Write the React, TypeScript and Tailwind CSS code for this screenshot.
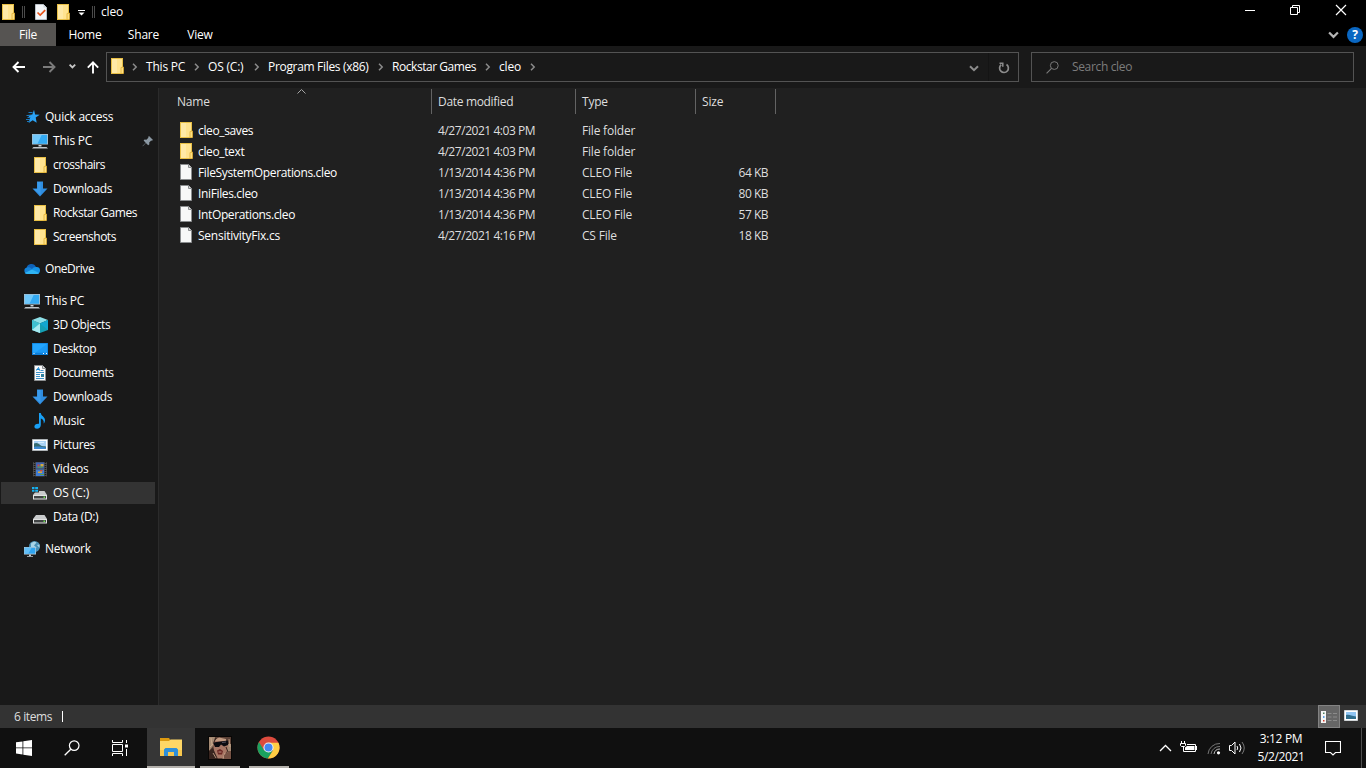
import type { ReactNode } from "react";

interface IconProps {
  className?: string;
}

// Icons
const Folder = ({ className = "w-4 h-4" }: IconProps) => (
  <svg viewBox="0 0 16 16" className={className}>
    <path d="M2 0h12v16H2z" fill="#e8bf45" />
    <path d="M3 1h10v14H3z" fill="#ffe38f" />
    <path d="M3 1h5v14H3z" fill="#ffe9a6" />
    <path d="M12 9.5l2.5-.5v6.5H12z" fill="#ffe082" stroke="#dfae33" strokeWidth="0.8" />
  </svg>
);

const BlankFile = () => (
  <svg viewBox="0 0 16 16" className="w-4 h-4">
    <path d="M2.5.5h8l3 3v12h-11z" fill="#f7f8f8" stroke="#8a8d8f" />
    <path d="M10.5.5v3h3" fill="#d8dadb" stroke="#8a8d8f" />
  </svg>
);

const CheckFile = () => (
  <svg viewBox="0 0 16 16" className="w-4 h-4">
    <path d="M2.5.5h8l3 3v12h-11z" fill="#f3f6f9" stroke="#b9c1c8" />
    <path d="M10.5.5v3h3" fill="#ccd3d9" />
    <path d="M4.5 8.5l2.7 2.6 5-5" fill="none" stroke="#e8551c" strokeWidth="1.7" />
  </svg>
);

const Star = () => (
  <svg viewBox="0 0 16 16" className="w-4 h-4">
    <path d="M10 .8l1.100 4.700 4.600.3-4 2.800 1 5.100L8.700 11.200 4.700 14l1.200-5L3.800 6l4.500-.5z" fill="#2ba3f5" />
    <path d="M4.500 3.500h4M2.500 6.500h4M3.500 8.500h3M2 10.500h4M3 12.500h3" stroke="#1b79bd" strokeWidth="1" />
  </svg>
);

const Computer = () => (
  <svg viewBox="0 0 16 16" className="w-4 h-4">
    <path d="M0 1h16v10.5H0z" fill="#b5c4ce" />
    <path d="M.8 1.8h14.4v9H.8z" fill="#33aaf3" />
    <path d="M.8 1.8h9L5.5 10.8H.8z" fill="#70c8fb" />
    <path d="M6.5 12h3v1.5h-3z" fill="#cfd6db" />
    <path d="M1.5 14h13l1.5 1.6H0z" fill="#c1c8cd" />
  </svg>
);

const DownArrow = () => (
  <svg viewBox="0 0 16 16" className="w-4 h-4">
    <path d="M5 .5h6v7h4.5L8 15.5.5 7.5H5z" fill="#2f8de0" />
    <path d="M5.5 1h3v13L1.5 8h4z" fill="#3a9bec" />
  </svg>
);

const OneDrive = () => (
  <svg viewBox="0 0 16 16" className="w-4 h-4">
    <path d="M2.500 7.200A5 5 0 0 1 12 6l-5 5z" fill="#0f62b8" />
    <path d="M3 6.500c1.800-.4 3.300.2 4.600 1.200l3 2.500L5 13H3.200A3.300 3.300 0 0 1 3 6.500z" fill="#1482d8" />
    <path d="M8 8.200c1-2 3-2.600 4.600-2.200A3.600 3.600 0 0 1 16 9.800c0 1.800-1.300 3.200-3 3.200h-3z" fill="#1593e6" />
    <path d="M.7 12l7.300-3.400 7.200 3.400c-.6.7-1.400 1-2.300 1H3.500C2.300 13 1.400 12.700.7 12z" fill="#2fb4f4" />
  </svg>
);

const Cube = () => (
  <svg viewBox="0 0 16 16" className="w-4 h-4">
    <path d="M8 0l8 3-8 3.5L0 3z" fill="#8ee0e8" />
    <path d="M0 3l8 3.5V16l-8-3z" fill="#63d0dc" />
    <path d="M0 3l8 3.5L0 13z" fill="#3fc0d0" />
    <path d="M16 3L8 6.5V16l8-3z" fill="#159fb3" />
    <path d="M0 13l8-6.500V16z" fill="#a5eaf0" />
    <path d="M16 3L8 6.5l8 6.5z" fill="#12a6cf" />
  </svg>
);

const Desktop = () => (
  <svg viewBox="0 0 16 16" className="w-4 h-4">
    <path d="M0 2h16v12H0z" fill="#0f7fd8" />
    <path d="M.8 2.8h14.4v9H.8z" fill="#1a99f5" />
    <path d="M.8 2.8h14.4l-12 9H.8z" fill="#23a5ff" />
    <path d="M1.500 12.500h1M11 12.500h1M14 12.500h1" stroke="#fff" />
  </svg>
);

const Document = () => (
  <svg viewBox="0 0 16 16" className="w-4 h-4">
    <path d="M2.5.5h8l3 3v12h-11z" fill="#fafafa" stroke="#8d9092" />
    <path d="M10.5.5v3h3" fill="#ddd" stroke="#8d9092" />
    <path d="M4.500 5.500l2-3 1 3M4.500 4.500h3" stroke="#1585d0" fill="none" />
    <path d="M8.500 5.500h3M4 7.500h8M4 9.500h4M4 11.500h4M4 13.500h8" stroke="#3b91c9" />
    <path d="M9 9h3v3H9z" fill="#2d7f9c" />
  </svg>
);

const Music = () => (
  <svg viewBox="0 0 16 16" className="w-4 h-4">
    <path d="M7 0h1.800c.2 3 4.200 3.600 4.200 7.200 0 1.300-.5 2.500-1.300 3.300C12.200 7.500 10.500 6 8.800 5.500V12c0 2.200-1.700 3.700-3.800 3.700-1.600 0-2.600-1-2.600-2.300 0-1.700 1.800-3 4.600-2.700z" fill="#18a0f6" />
  </svg>
);

const Picture = () => (
  <svg viewBox="0 0 16 16" className="w-4 h-4">
    <path d="M.5 2.500h15v11H.5z" fill="#fff" stroke="#aeb3b6" />
    <path d="M2 4h12v8H2z" fill="#a9d2f5" />
    <path d="M2 6.500c3-1.500 5 .5 6.500 1.700S12 9 14 9.500V12H2z" fill="#356b70" />
    <path d="M2 10c3-1 8 0 12 .5V12H2z" fill="#3e8ad0" />
    <path d="M6 5.500h6" stroke="#d5ecfd" />
  </svg>
);

const Video = () => (
  <svg viewBox="0 0 16 16" className="w-4 h-4">
    <path d="M1 1h14v14.500H1z" fill="#4d4d4d" />
    <path d="M2.500 1v15M13.500 1v15" stroke="#191919" strokeWidth="1.500" strokeDasharray="1 1" />
    <path d="M4 1.500h8v6H4z" fill="#3a62b4" />
    <path d="M4 8.500h8v6.500H4z" fill="#3f7cd4" />
    <path d="M5.500 3.500h2v2h-2zM8 9h2.500v1.500H8z" fill="#d2483b" />
    <path d="M8.500 3h3v2.500h-3zM6 10.500h4V12H6z" fill="#d5a93b" />
    <path d="M5.500 5.500h5v1.200h-5zM8 13h4v1H8z" fill="#58a04a" />
  </svg>
);

const Drive = ({ windows }: { windows?: boolean }) => (
  <svg viewBox="0 0 16 16" className="w-4 h-4">
    <path d="M4 6h8.500L15 10H1z" fill="#c9cbcc" />
    <path d="M1 10h14v4.500H1z" fill="#e2e3e3" />
    <path d="M2 11h12v2.500H2z" fill="#414445" />
    <path d="M11.500 11.500h1.500v1.500h-1.500z" fill="#6be34c" />
    {windows && (
      <>
        <path d="M0 1h7v6.500H0z" fill="#333" />
        <path d="M0 2h2.500v2H0zM3.200 2H6v2H3.200zM0 4.700h2.500v2H0zM3.200 4.700H6v2H3.200z" fill="#15b1f1" />
      </>
    )}
  </svg>
);

const Network = () => (
  <svg viewBox="0 0 16 16" className="w-4 h-4">
    <circle cx="10.500" cy="5.500" r="5.500" fill="#4a90b5" />
    <path d="M7 2.500c2-2 4-2 5.500-1L10 4.500l2.500 2-2 3L7 6zM13 4l2.500-.5V7z" fill="#a9d4e6" />
    <path d="M0 6h12v7.500H0z" fill="#b6ccd9" />
    <path d="M.7 6.700h10.600v6H.7z" fill="#2fa4ef" />
    <path d="M.7 6.700h7l-3.500 6H.7z" fill="#63bff7" />
    <path d="M5 13.500h2V15h2v.8H3V15h2z" fill="#c1c8cd" />
  </svg>
);

const Pin = () => (
  <svg viewBox="0 0 12 12" className="w-3 h-3">
    <path d="M7 1l4 4-1.200.7-.6-.2-2 2 .2 1.800-1.200 1-2.300-2.300L.8 11.200.5 11l3.200-3.200L1.600 5.500l1-1 1.800.2 2-2-.2-.7z" fill="#8b98a3" />
  </svg>
);

const Chevron = () => (
  <svg viewBox="0 0 6 8" className="w-1.5 h-2">
    <path d="M1 .8L4.200 4 1 7.200" fill="none" stroke="#8c8c8c" strokeWidth="1.500" />
  </svg>
);

const ChevronDown = ({ className }: IconProps) => (
  <svg viewBox="0 0 10 7" className={className}>
    <path d="M1 1.200l4 4 4-4" fill="none" stroke="currentColor" strokeWidth="2" />
  </svg>
);

const Glass = ({ className }: IconProps) => (
  <svg viewBox="0 0 16 16" className={className}>
    <circle cx="10.200" cy="5.600" r="4.800" fill="none" stroke="currentColor" strokeWidth="1.200" />
    <path d="M6.800 9.200L.7 15.300" stroke="currentColor" strokeWidth="1.300" />
  </svg>
);

const Chrome = () => (
  <svg viewBox="0 0 24 24" className="w-[23px] h-[23px]">
    <circle cx="12" cy="12" r="11.500" fill="#dd4b3e" />
    <path d="M2 6.200A11.500 11.500 0 0 0 11.400 23.500L16.800 14.800 7.300 14.800z" fill="#1aa15f" />
    <path d="M11.400 23.500A11.500 11.500 0 0 0 22.400 7H12l4.800 7.800z" fill="#ffce44" />
    <circle cx="12" cy="12" r="5.300" fill="#f1f1f1" />
    <circle cx="12" cy="12" r="4.200" fill="#4587f3" />
  </svg>
);

const GameIcon = () => (
  <svg viewBox="0 0 24 24" className="w-6 h-6">
    <path d="M0 0h24v24H0z" fill="#080605" />
    <path d="M1 1h22v22H1z" fill="#5b4136" />
    <path d="M1 1h6l-2 9-4 5zM19 8h4v8l-4 3z" fill="#a58b74" />
    <path d="M5 6l5-4 7 2 3 5-1 6-4 7H9l-3-7z" fill="#a87866" />
    <path d="M7 4l4-2.500L18 3v2H7z" fill="#c29b82" />
    <path d="M5 6.500L20 4.500v4.500l-4 1.500-3-2-2 2.500H7z" fill="#0c0c10" />
    <path d="M14 6.500l4-.5" stroke="#52515e" />
    <path d="M9 14.500l3-1.500 3 2-1 3.500h-4z" fill="#6d2924" />
    <path d="M10.500 16h3" stroke="#b98f80" />
    <path d="M1 15l4-3 2 5 3 6H1z" fill="#38251f" />
    <path d="M3 2l1 7M5 17l3 5M17 17l-2 6M21 3l1 8M2 11l3-3" stroke="#cfad90" strokeWidth=".8" />
    <path d="M16 19l5-4h2v8h-7z" fill="#765244" />
    <path d="M8 2L6 6M18 11l2 5" stroke="#34231c" />
    <path d="M.5.5h23v23H.5z" fill="none" stroke="#080605" />
  </svg>
);

const ExplorerIcon = () => (
  <svg viewBox="0 0 22 18" className="w-[22px] h-[18px]">
    <path d="M0 0h9l1 1.500V5H0z" fill="#dc9a10" />
    <path d="M0 3h9l1.500-1.500H22V18H0z" fill="#ffd766" />
    <path d="M0 12h22v6H0z" fill="#f8c84e" />
    <path d="M4 18v-6.500L5.500 10h11l1.500 1.500V18h-4v-4H8v4z" fill="#2f8fd8" />
  </svg>
);

// Sidebar
interface NavItem {
  label: string;
  icon: ReactNode;
  active?: boolean;
  pinned?: boolean;
  tracking?: string;
}

interface NavGroup {
  root: NavItem;
  items: NavItem[];
}

const groups: NavGroup[] = [
  {
    root: { label: "Quick access", icon: <Star />, tracking: "tracking-[-0.25px]" },
    items: [
      { label: "This PC", icon: <Computer />, pinned: true },
      { label: "crosshairs", icon: <Folder />, tracking: "tracking-[-0.5px]" },
      { label: "Downloads", icon: <DownArrow />, tracking: "tracking-[-0.4px]" },
      { label: "Rockstar Games", icon: <Folder />, tracking: "tracking-[-0.45px]" },
      { label: "Screenshots", icon: <Folder />, tracking: "tracking-[-0.5px]" },
    ],
  },
  { root: { label: "OneDrive", icon: <OneDrive />, tracking: "tracking-[-0.45px]" }, items: [] },
  {
    root: { label: "This PC", icon: <Computer /> },
    items: [
      { label: "3D Objects", icon: <Cube />, tracking: "tracking-[-0.35px]" },
      { label: "Desktop", icon: <Desktop />, tracking: "tracking-[-0.45px]" },
      { label: "Documents", icon: <Document />, tracking: "tracking-[-0.4px]" },
      { label: "Downloads", icon: <DownArrow />, tracking: "tracking-[-0.4px]" },
      { label: "Music", icon: <Music /> },
      { label: "Pictures", icon: <Picture />, tracking: "tracking-[-0.4px]" },
      { label: "Videos", icon: <Video />, tracking: "tracking-[-0.3px]" },
      { label: "OS (C:)", icon: <Drive windows />, active: true, tracking: "tracking-[-0.1px]" },
      { label: "Data (D:)", icon: <Drive />, tracking: "tracking-[-0.35px]" },
    ],
  },
  { root: { label: "Network", icon: <Network />, tracking: "tracking-[-0.3px]" }, items: [] },
];

// Files
const files = [
  { name: "cleo_saves", date: "4/27/2021 4:03 PM", type: "File folder", size: "" },
  { name: "cleo_text", date: "4/27/2021 4:03 PM", type: "File folder", size: "" },
  { name: "FileSystemOperations.cleo", date: "1/13/2014 4:36 PM", type: "CLEO File", size: "64 KB" },
  { name: "IniFiles.cleo", date: "1/13/2014 4:36 PM", type: "CLEO File", size: "80 KB" },
  { name: "IntOperations.cleo", date: "1/13/2014 4:36 PM", type: "CLEO File", size: "57 KB" },
  { name: "SensitivityFix.cs", date: "4/27/2021 4:16 PM", type: "CS File", size: "18 KB" },
];

const crumbs = [
  { label: "This PC", width: "w-[62px]" },
  { label: "OS (C:)", width: "w-[60px]" },
  { label: "Program Files (x86)", width: "w-[124px]", tracking: "tracking-[-0.32px]" },
  { label: "Rockstar Games", width: "w-[107px]", tracking: "tracking-[-0.45px]" },
  { label: "cleo", width: "w-[45px]" },
];

function SideRow({ item, nested }: { item: NavItem; nested?: boolean }) {
  return (
    <div
      className={`flex items-center h-[22px] my-px ml-px mr-[3px] gap-[5px] ${
        nested ? "pl-[31px]" : "pl-[23px]"
      } ${item.active ? "bg-[#333333]" : ""}`}
    >
      {item.icon}
      <span className={`flex-1 ${item.tracking ?? ""}`}>{item.label}</span>
      {item.pinned && (
        <span className="mr-px">
          <Pin />
        </span>
      )}
    </div>
  );
}

function TitleBar() {
  return (
    <div className="flex h-[23px] bg-black">
      <div className="flex items-center">
        <Folder />
        <span className="w-[3px] h-3 ml-[6px] border-x border-[#4b4b4b]" />
        <span className="ml-2">
          <CheckFile />
        </span>
        <span className="ml-[6px]">
          <Folder />
        </span>
        <svg viewBox="0 0 7 6" className="w-[7px] h-[6px] ml-[7px] mt-0.5">
          <path d="M0 .5h7" stroke="#fff" />
          <path d="M0.5 2.5h6l-3 3z" fill="#fff" />
        </svg>
        <span className="w-[3px] h-3 ml-[7px] border-x border-[#4b4b4b]" />
        <span className="ml-[6px] mt-px">cleo</span>
      </div>
      <svg viewBox="0 0 104 12" className="w-[104px] h-3 ml-auto mr-[19px] mt-[4px]" fill="none" stroke="#fff">
        <path d="M2 6.500h10" />
        <path d="M47.500 3.500h7v7h-7zM49.500 3.500v-2h7v7h-2" />
        <path d="M93 1l10 10M103 1L93 11" strokeWidth="1.200" />
      </svg>
    </div>
  );
}

function Ribbon() {
  return (
    <div className="flex items-center h-[23px] bg-black">
      <div className="w-14 h-full bg-[#565452] flex items-center justify-center">File</div>
      <div className="w-[58px] text-center">Home</div>
      <div className="w-[59px] text-center">Share</div>
      <div className="w-[54px] text-center">View</div>
      <ChevronDown className="w-[11px] h-2 ml-auto mr-[8px] text-[#b5b5b5]" />
      <div className="w-4 h-4 mr-[-2px] rounded-full bg-[#0a67c2] flex items-center justify-center font-bold text-[12px] leading-none">
        ?
      </div>
      <div className="w-[5px]" />
    </div>
  );
}

function AddressBar() {
  return (
    <div className="flex h-[42px] bg-[#191919] pt-[6px]">
      <svg viewBox="0 0 106 30" className="w-[106px] h-[30px] shrink-0" fill="none">
        <path d="M14 15h11M18.500 10l-5 5 5 5" stroke="#fff" strokeWidth="1.900" />
        <path d="M43 15h11M49.500 10l5 5-5 5" stroke="#7b7b7b" strokeWidth="1.900" />
        <path d="M69.600 12.700l2.800 2.800 2.800-2.800" stroke="#c7c7c7" strokeWidth="1.800" />
        <path d="M93 21.500V10.500M87.800 15.600l5.200-5.200 5.200 5.200" stroke="#fff" strokeWidth="1.900" />
      </svg>
      <div className="flex items-center w-[913px] h-[30px] border border-[#535353] shrink-0">
        <span className="ml-[2px] -mt-0.5">
          <Folder />
        </span>
        <span className="ml-[7px] mr-2">
          <Chevron />
        </span>
        {crumbs.map((crumb) => (
          <div key={crumb.label} className={`flex items-center justify-between pr-[8px] ${crumb.width}`}>
            <span className={`whitespace-nowrap ${crumb.tracking ?? ""}`}>{crumb.label}</span>
            <Chevron />
          </div>
        ))}
        <ChevronDown className="w-[10px] h-[7px] ml-auto mt-[3px] text-[#8c8c8c]" />
        <div className="w-px h-[28px] ml-[9px] bg-[#141414]" />
        <svg viewBox="0 0 12 12" className="w-3 h-3 ml-[9px] mr-2 mt-[2px]" fill="none" stroke="#8c8c8c" strokeWidth="1.700">
          <path d="M8.500 2.500A4.400 4.400 0 1 1 3.200 2.700" />
          <path d="M1.500 1.300h3.300v3.500" strokeWidth="1.500" />
        </svg>
      </div>
      <div className="flex items-center w-[323px] h-[30px] ml-3 border border-[#535353] text-[#7c7c7c] shrink-0">
        <Glass className="w-[13px] h-[13px] ml-[14px]" />
        <span className="ml-[13px] tracking-[-0.35px]">Search cleo</span>
      </div>
    </div>
  );
}

function FileList() {
  return (
    <div className="flex-1 bg-[#202020]">
      <div className="relative flex h-[26px] mt-px text-[#dedede]">
        <svg viewBox="0 0 9 5" className="absolute left-[138px] top-0 w-[9px] h-[5px]">
          <path d="M.5 4.500l4-4 4 4" fill="none" stroke="#a5a5a5" />
        </svg>
        <div className="w-[273px] h-[25px] pl-[18px] border-r border-[#636363] leading-[25px]">Name</div>
        <div className="w-[144px] h-[25px] pl-[6px] border-r border-[#636363] leading-[25px] tracking-[-0.32px]">
          Date modified
        </div>
        <div className="w-[120px] h-[25px] pl-[6px] border-r border-[#636363] leading-[25px]">Type</div>
        <div className="w-[80px] h-[25px] pl-[6px] border-r border-[#636363] leading-[25px]">Size</div>
      </div>
      <div className="mt-[5px] text-[#dedede]">
        {files.map((file) => (
          <div key={file.name} className="flex items-center h-[21px]">
            <div className="flex items-center w-[279px] pl-[19px] gap-1 text-white tracking-[-0.36px]">
              <span className="-mt-0.5">{file.type === "File folder" ? <Folder /> : <BlankFile />}</span>
              <span className={file.name.endsWith(".cs") ? "tracking-[-0.25px]" : ""}>{file.name}</span>
            </div>
            <div className="w-[144px] tracking-[-0.45px]">{file.date}</div>
            <div className="w-[120px]">{file.type}</div>
            <div className="w-[66px] text-right tracking-[-0.5px]">{file.size}</div>
          </div>
        ))}
      </div>
    </div>
  );
}

function Taskbar() {
  return (
    <div className="flex h-10 bg-[#101010]">
      <div className="w-12 flex items-center justify-center">
        <svg viewBox="0 0 16 16" className="w-4 h-4" fill="#fff">
          <path d="M0 2.300L6.500 1.400v6.100H0zM7.300 1.300L16 0v7.500H7.300zM0 8.300h6.500v6.200L0 13.600zM7.300 8.300H16V16l-8.700-1.300z" />
        </svg>
      </div>
      <div className="w-12 flex items-center justify-center">
        <Glass className="w-4 h-4 text-white" />
      </div>
      <div className="w-[51px] flex items-center justify-center pr-[3px]">
        <svg viewBox="0 0 16 16" className="w-4 h-4" fill="none" stroke="#fff">
          <path d="M.5 0v2.500h10V0M.5 16v-2.500h10V16M.5 4.500h10v7H.5zM14.500 0v3M14.500 9v7" />
          <path d="M13 4.500h3v3h-3z" fill="#fff" stroke="none" />
        </svg>
      </div>
      <div className="w-12 flex items-center justify-center bg-[#363636] border-b-2 border-[#b5b2ad]">
        <ExplorerIcon />
      </div>
      <div className="w-10 ml-[5px] flex items-center justify-center pt-px border-b-2 border-[#b5b2ad]">
        <GameIcon />
      </div>
      <div className="w-10 ml-[9px] flex items-center justify-center pt-px pr-px border-b-2 border-[#b5b2ad]">
        <Chrome />
      </div>
      <div className="flex items-center ml-auto">
        <svg viewBox="0 0 88 16" className="w-[88px] h-4 mr-[3px]" fill="none" stroke="#fff">
          <path d="M1 11l5.500-5.500L12 11" strokeWidth="1.300" />
          <path d="M28 4.500h8.500v7H24.500V7M37.500 6v4" />
          <path d="M28 6h7.500v4H26V7.500z" fill="#fff" stroke="none" />
          <path d="M22.500 1v2M25.500 1v2M21.500 3.500h5v2l-1 1h-3l-1-1z" />
          <path d="M49 14A11.500 11.500 0 0 1 61 3.500M52 14A8.500 8.500 0 0 1 61 6.500" stroke="#777" />
          <path d="M55 14A6 6 0 0 1 61 9" stroke="#bbb" />
          <circle cx="59.500" cy="12.800" r="1.600" fill="#fff" stroke="none" />
          <path d="M70.500 5.500h2l3.500-3.500v12l-3.500-3.500h-2z" />
          <path d="M78 6q1.500 2 0 4M80.500 4q3 4 0 8" />
          <path d="M83 2q4.500 6 0 12" stroke="#777" />
        </svg>
        <div className="w-[62px] text-center leading-[18px] whitespace-nowrap tracking-[-0.35px]">
          <div>3:12 PM</div>
          <div>5/2/2021</div>
        </div>
        <svg viewBox="0 0 16 16" className="w-4 h-4 ml-[13px] mr-[20px]" fill="none" stroke="#fff">
          <path d="M.5 1.500h15v11h-5L8 15l-2.500-2.500h-5z" strokeWidth="1.100" />
        </svg>
        <div className="w-px h-10 mr-1 bg-[#4e4e4e]" />
      </div>
    </div>
  );
}

export default function App() {
  return (
    <div className="flex flex-col w-[1366px] h-[768px] overflow-hidden bg-[#191919] text-white text-[12px] leading-4 tracking-[-0.2px] font-['Open_Sans',sans-serif]">
      <TitleBar />
      <Ribbon />
      <AddressBar />
      <div className="flex flex-1 min-h-0">
        <div className="w-[158px] pt-[17px] bg-[#191919]">
          {groups.map((group) => (
            <div key={group.root.label} className="flex flex-col mb-2">
              <SideRow item={group.root} />
              {group.items.map((item) => (
                <SideRow key={item.label} item={item} nested />
              ))}
            </div>
          ))}
        </div>
        <div className="w-px bg-[#2b2b2b]" />
        <FileList />
      </div>
      <div className="flex items-center h-[23px] bg-[#333333]">
        <span className="w-[48px] ml-[14px] text-[#dedede] tracking-[-0.4px]">6 items</span>
        <span className="w-px h-[11px] bg-white" />
        <div className="w-[22px] h-[23px] ml-auto bg-[#666666] border border-[#838383] flex items-center justify-center">
          <svg viewBox="0 0 16 14" className="w-4 h-[14px]">
            <path d="M0 1h5v12H0z" fill="#f5f5f5" />
            <path d="M2 2.500h1.500v1.500H2z" fill="#4d7d5c" />
            <path d="M2 6.300h1.500v1.500H2z" fill="#2a83dc" />
            <path d="M2 10h1.500v1.500H2z" fill="#d33b2c" />
            <path d="M6.500 3.500h4M12 3.500h4M6.500 7h4M12 7h4M6.500 10.500h4M12 10.500h4" stroke="#8b8b8b" />
          </svg>
        </div>
        <div className="w-[26px] flex items-center pl-[3px] pb-px">
          <svg viewBox="0 0 16 16" className="w-4 h-4">
            <path d="M1.500 2.500h13v10h-13z" fill="#fff" stroke="#d0d4d6" />
            <path d="M3 4h10v7H3z" fill="#8fc4f2" />
            <path d="M3 7c3-1 5 .5 10 1.500V11H3z" fill="#2f6d8c" />
          </svg>
        </div>
      </div>
      <Taskbar />
    </div>
  );
}
